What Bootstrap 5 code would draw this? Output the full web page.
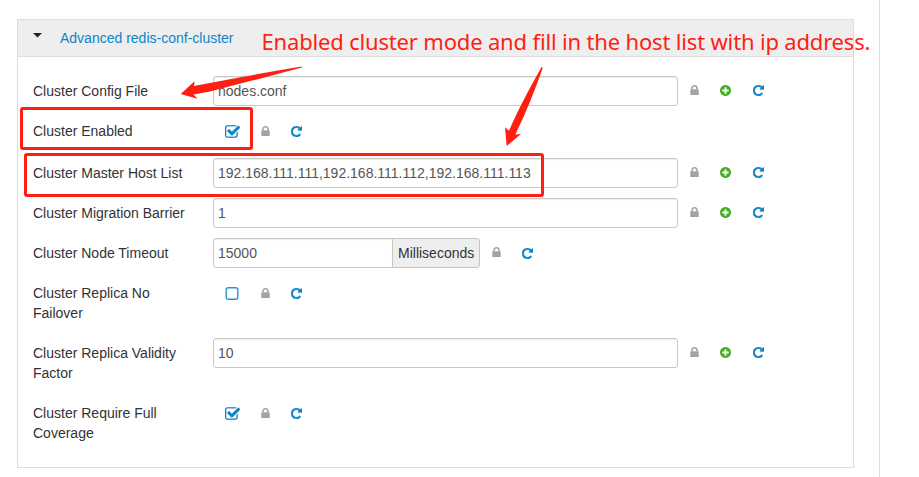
<!DOCTYPE html>
<html lang="en">
<head>
<meta charset="utf-8">
<title>Advanced redis-conf-cluster</title>
<link rel="stylesheet" href="https://cdn.jsdelivr.net/npm/bootstrap@5.3.0/dist/css/bootstrap.min.css">
<style>
body{font:14px/20px "Liberation Sans",Arial,sans-serif;color:#333;overflow:hidden}
.page-area{width:880px;height:477px;border-right:1px solid #ddd;padding:19px 0 0 17px}
.panel-box{width:837px;height:449px;border:1px solid #ddd}
.panel-head{height:37px;background:#eee;border-bottom:1px solid #ddd;padding-left:15px}
.panel-head a{color:#0b84cb;margin-left:18px}
.caret-down{width:9px;height:5px;fill:#222;margin-top:-6px}
.panel-fields{padding:19px 0 0 15px}
.conf-row{height:40px}
.conf-row.tall{height:60px}
.conf-row.flagged{height:42px}
.conf-label{width:180px;padding:5px 18px 0 0}
.conf-ctl{height:30px}
.conf-ctl .form-control{width:465px;height:30px;padding:4px;font-size:14px;line-height:20px;color:#555;border:1px solid #c8c8c8;border-radius:3px;box-shadow:inset 0 1px 1px rgba(0,0,0,.075)}
.conf-ctl .input-group{width:267px}
.conf-ctl .input-group .form-control{width:180px;flex:none;border-radius:3px 0 0 3px}
.conf-ctl .input-group-text{width:88px;height:30px;padding:0 0 0 5px;font-size:14px;line-height:20px;color:#333;background:#eee;border:1px solid #c4c4c4;border-radius:0 3px 3px 0}
.ic-lock{width:9px;height:10px;fill:#a3a3a3;stroke:#a3a3a3;stroke-width:50;margin-left:12px}
.ic-add{width:11px;height:11px;fill:#46ad25;margin:0 0 1px 21px}
.ic-redo{width:11px;height:11px;fill:#0b84cb;stroke:#0b84cb;stroke-width:50;margin:1px 0 0 21px}
.form-control + .ic-lock{margin-bottom:2px}
.input-group + .ic-lock{margin-bottom:2px}
.ic-add + .ic-redo{margin:0 0 1px 22px}
.ic-check{width:15px;height:13px;fill:#0b84cb;stroke:#0b84cb;stroke-width:30;margin-left:11.5px}
.ic-check + .ic-lock{margin-left:21.5px}
.notes{inset:0;width:919px;height:477px;pointer-events:none}
.notes text{font:22px "Noto Sans","Open Sans",sans-serif;fill:#ff1e12}
</style>
</head>
<body class="bg-white">
<svg class="d-none">
<symbol id="lock" viewBox="320 128 1152 1408"><path d="M640 768h512v-192q0-106-75-181t-181-75-181 75-75 181v192zm832 96v576q0 40-28 68t-68 28h-960q-40 0-68-28t-28-68v-576q0-40 28-68t68-28h32v-192q0-184 132-316t316-132 316 132 132 316v192h32q40 0 68 28t28 68z"/></symbol>
<symbol id="add" viewBox="128 128 1536 1536"><path d="M1344 960v-128q0-26-19-45t-45-19h-256v-256q0-26-19-45t-45-19h-128q-26 0-45 19t-19 45v256h-256q-26 0-45 19t-19 45v128q0 26 19 45t45 19h256v256q0 26 19 45t45 19h128q26 0 45-19t19-45v-256h256q26 0 45-19t19-45zm320-64q0 209-103 385.5t-279.5 279.5-385.5 103-385.5-103-279.5-279.5-103-385.5 103-385.5 279.5-279.5 385.5-103 385.5 103 279.5 279.5 103 385.5z"/></symbol>
<symbol id="redo" viewBox="128 128 1536 1536"><path d="M1664 256v448q0 26-19 45t-45 19h-448q-42 0-59-40-17-39 14-69l138-138q-148-137-349-137-104 0-198.5 40.5t-163.5 109.5-109.5 163.5-40.5 198.5 40.5 198.5 109.5 163.5 163.5 109.5 198.5 40.5q119 0 225-52t179-147q7-10 23-12 15 0 25 9l137 138q9 8 9.5 20.5t-7.5 22.5q-109 132-264 204.5t-327 72.5q-156 0-298-61t-245-164-164-245-61-298 61-298 164-245 245-164 298-61q147 0 284.5 55.5t244.5 156.5l130-129q29-31 70-14 39 17 39 59z"/></symbol>
<symbol id="check" viewBox="64 128 1664 1408"><path d="M1472 930v318q0 119-84.5 203.5t-203.5 84.5h-832q-119 0-203.5-84.5t-84.5-203.5v-832q0-119 84.5-203.5t203.5-84.5h832q63 0 117 25 15 7 18 23 3 17-9 29l-49 49q-10 10-23 10-3 0-9-2-23-6-45-6h-832q-66 0-113 47t-47 113v832q0 66 47 113t113 47h832q66 0 113-47t47-113v-254q0-13 9-22l64-64q10-10 23-10 6 0 12 3 20 8 20 29zm231-489l-814 814q-24 24-57 24t-57-24l-430-430q-24-24-24-57t24-57l110-110q24-24 57-24t57 24l263 263 647-647q24-24 57-24t57 24l110 110q24 24 24 57t-24 57z"/></symbol>
<symbol id="uncheck" viewBox="0 0 15 13"><rect x="1.2" y=".7" width="11.6" height="11.6" rx="2" fill="none" stroke="#2a90d0" stroke-width="1.4"/></symbol>
</svg>
<main class="page-area">
<section class="panel-box">
<header class="panel-head d-flex align-items-center">
<svg class="caret-down" viewBox="0 0 9 5"><path d="M0 0h9L4.5 4.5z"/></svg>
<a href="#" class="text-decoration-none">Advanced redis-conf-cluster</a>
</header>
<div class="panel-fields">
<div class="conf-row d-flex"><label class="conf-label">Cluster Config File</label><div class="conf-ctl d-flex align-items-center"><input class="form-control" value="nodes.conf"><svg class="ic-lock"><use href="#lock"/></svg><svg class="ic-add"><use href="#add"/></svg><svg class="ic-redo"><use href="#redo"/></svg></div></div>
<div class="conf-row flagged d-flex"><label class="conf-label">Cluster Enabled</label><div class="conf-ctl d-flex align-items-center"><svg class="ic-check"><use href="#check"/></svg><svg class="ic-lock"><use href="#lock"/></svg><svg class="ic-redo"><use href="#redo"/></svg></div></div>
<div class="conf-row d-flex"><label class="conf-label">Cluster Master Host List</label><div class="conf-ctl d-flex align-items-center"><input class="form-control" value="192.168.111.111,192.168.111.112,192.168.111.113"><svg class="ic-lock"><use href="#lock"/></svg><svg class="ic-add"><use href="#add"/></svg><svg class="ic-redo"><use href="#redo"/></svg></div></div>
<div class="conf-row d-flex"><label class="conf-label">Cluster Migration Barrier</label><div class="conf-ctl d-flex align-items-center"><input class="form-control" value="1"><svg class="ic-lock"><use href="#lock"/></svg><svg class="ic-add"><use href="#add"/></svg><svg class="ic-redo"><use href="#redo"/></svg></div></div>
<div class="conf-row d-flex"><label class="conf-label">Cluster Node Timeout</label><div class="conf-ctl d-flex align-items-center"><div class="input-group flex-nowrap"><input class="form-control" value="15000"><span class="input-group-text">Milliseconds</span></div><svg class="ic-lock"><use href="#lock"/></svg><svg class="ic-redo mt-0"><use href="#redo"/></svg></div></div>
<div class="conf-row tall d-flex"><label class="conf-label">Cluster Replica No Failover</label><div class="conf-ctl d-flex align-items-center"><svg class="ic-check"><use href="#uncheck"/></svg><svg class="ic-lock"><use href="#lock"/></svg><svg class="ic-redo"><use href="#redo"/></svg></div></div>
<div class="conf-row tall d-flex"><label class="conf-label">Cluster Replica Validity Factor</label><div class="conf-ctl d-flex align-items-center"><input class="form-control" value="10"><svg class="ic-lock"><use href="#lock"/></svg><svg class="ic-add"><use href="#add"/></svg><svg class="ic-redo"><use href="#redo"/></svg></div></div>
<div class="conf-row tall d-flex"><label class="conf-label">Cluster Require Full Coverage</label><div class="conf-ctl d-flex align-items-center"><svg class="ic-check"><use href="#check"/></svg><svg class="ic-lock"><use href="#lock"/></svg><svg class="ic-redo"><use href="#redo"/></svg></div></div>
</div>
</section>
</main>
<svg class="notes position-absolute" viewBox="0 0 919 477">
<g fill="none" stroke="#ff1e12" stroke-width="3"><rect x="21.5" y="108.5" width="230" height="40" rx="1.5"/><rect x="25.5" y="154.5" width="517" height="41" rx="1.5"/></g>
<g fill="#ff1e12"><path d="M180.7 94L194.5 81.2L194 86Q245 76 301.7 66.6L302 67.5Q255 80 210 91.5L193.5 94.5L197.5 98.7Z"/><path d="M506.7 146L505 127.2L509 130.8Q520 105 541.6 67L542.8 67.8Q531 102 515.3 134.8L521.2 133.8Z"/></g>
<text x="261.5" y="50" textLength="609" lengthAdjust="spacing">Enabled cluster mode and fill in the host list with ip address.</text>
</svg>
<script src="https://cdn.jsdelivr.net/npm/bootstrap@5.3.0/dist/js/bootstrap.bundle.min.js"></script>
</body>
</html>
